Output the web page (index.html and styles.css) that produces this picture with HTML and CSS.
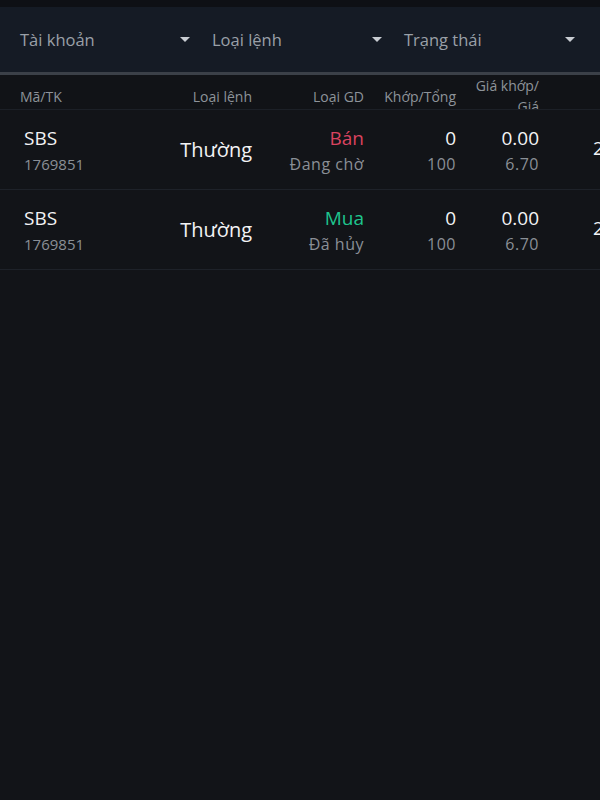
FILE: index.html
```html
<!DOCTYPE html>
<html lang="vi">
<head>
<meta charset="utf-8">
<link rel="stylesheet" href="styles.css">
</head>
<body>
<div class="app">
  <div class="topband"></div>
  <div class="filters">
    <div class="filter"><span>Tài khoản</span><span class="caret"></span></div>
    <div class="filter"><span>Loại lệnh</span><span class="caret"></span></div>
    <div class="filter"><span>Trạng thái</span><span class="caret"></span></div>
  </div>
  <div class="divider"></div>
  <div class="thead">
    <div class="c1">Mã/TK</div>
    <div class="c2">Loại lệnh</div>
    <div class="c3">Loại GD</div>
    <div class="c4">Khớp/Tổng</div>
    <div class="c5 wrap">Giá khớp/<br>Giá</div>
    <div class="c6"></div>
  </div>
  <div class="row">
    <div class="c1 stack"><span class="main">SBS</span><span class="sub">1769851</span></div>
    <div class="c2 type">Thường</div>
    <div class="c3 stack"><span class="main sell">Bán</span><span class="sub">Đang chờ</span></div>
    <div class="c4 stack"><span class="main">0</span><span class="sub">100</span></div>
    <div class="c5 stack"><span class="main">0.00</span><span class="sub">6.70</span></div>
    <div class="c6 stack"><span class="main">20/10</span><span class="sub"></span></div>
  </div>
  <div class="row">
    <div class="c1 stack"><span class="main">SBS</span><span class="sub">1769851</span></div>
    <div class="c2 type">Thường</div>
    <div class="c3 stack"><span class="main buy">Mua</span><span class="sub">Đã hủy</span></div>
    <div class="c4 stack"><span class="main">0</span><span class="sub">100</span></div>
    <div class="c5 stack"><span class="main">0.00</span><span class="sub">6.70</span></div>
    <div class="c6 stack"><span class="main">20/10</span><span class="sub"></span></div>
  </div>
</div>
</body>
</html>
```

FILE: styles.css
```css
* { box-sizing: border-box; }
html, body { margin: 0; padding: 0; background: #121418; }
body { width: 600px; height: 800px; overflow: hidden; font-family: "Open Sans", "Noto Sans", sans-serif; }
.app { width: 600px; height: 800px; background: #121418; overflow: hidden; }
.topband { height: 7px; background: #0e1015; }
.filters {
  height: 65px;
  background: #151b25;
  display: grid;
  grid-template-columns: 171px 171px 172px;
  column-gap: 21px;
  padding-left: 20px;
  align-items: center;
  color: #9aa0a8;
  font-size: 16.5px;
}
.filter { display: flex; justify-content: space-between; align-items: center; padding-bottom: 1px; }
.caret {
  width: 0; height: 0;
  border-left: 5px solid transparent;
  border-right: 5px solid transparent;
  border-top: 5px solid #c9cdd3;
  margin-right: 1px;
}
.divider { height: 3px; background: #3b4048; }
.thead, .row {
  display: grid;
  grid-template-columns: 140px 92px 112px 92px 83px 80px;
  padding-left: 20px;
  width: 640px;
}
.thead {
  height: 35px;
  background: #111317;
  border-bottom: 1px solid #1c2027;
  color: #8e939a;
  font-size: 14px;
  align-items: center;
  overflow: hidden;
  padding-bottom: 3px;
}
.thead .wrap { align-self: start; line-height: 21px; margin-top: 0; }
.c2, .c3, .c4, .c5 { text-align: right; }
.c6 { padding-left: 54px; }
.row {
  height: 80px;
  border-bottom: 1px solid #1e2229;
  align-items: center;
  background: #121418;
}
.row .c1 { padding-left: 4px; }
.stack { display: flex; flex-direction: column; gap: 4px; }
.row .c2, .row .c3, .row .c4, .row .c5 { align-items: flex-end; }
.main { color: #f2f3f5; font-size: 19px; line-height: 24px; }
.sub { color: #8a8f96; font-size: 15px; line-height: 20px; }
.row .c3 .sub, .row .c4 .sub, .row .c5 .sub { font-size: 16px; letter-spacing: 0.5px; }
.type { color: #f2f3f5; font-size: 20px; }
.sell { color: #d9435f; }
.buy { color: #1ec48d; }
```
